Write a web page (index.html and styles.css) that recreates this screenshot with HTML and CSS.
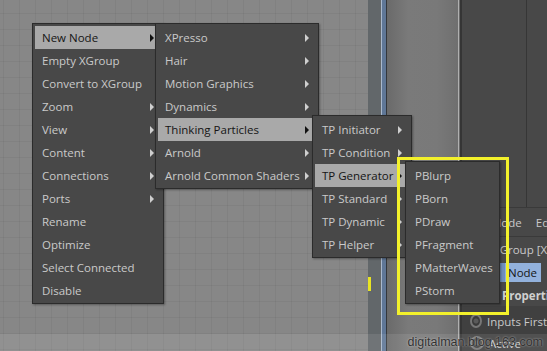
FILE: index.html
```html
<!DOCTYPE html>
<html lang="en">
  <head>
    <meta charset="UTF-8" />
    <meta name="viewport" content="width=device-width, initial-scale=1.0" />
    <title>XPresso context menu</title>
    <link rel="stylesheet" href="styles.css">
  </head>
  <body>
    <div class="screen">
      <!-- node editor canvas and the docked panels to its right -->
      <div class="canvas"></div>
      <div class="dock"></div>
      <div class="sash"></div>
      <div class="viewer"></div>
      <div class="divider"></div>
      <div class="panel">
        <div class="panel-top">
          <div class="panel-col"></div>
          <div class="panel-col"></div>
        </div>
        <div class="attrs">
          <div class="attr-tabs"><span>Mode</span><span>Edit</span></div>
          <div class="attr-title">XGroup [XGroup]</div>
          <div class="attr-buttons"><span class="btn-node">Node</span></div>
          <div class="attr-head">Properties</div>
          <div class="attr-radio"><span class="radio"></span>Inputs First</div>
          <div class="attr-radio"><span class="radio"></span>Active</div>
        </div>
      </div>

      <div class="marker"></div>

      <!-- context menu cascade -->
      <ul class="menu menu-main">
        <li class="item active sub">New Node</li>
        <li class="item">Empty XGroup</li>
        <li class="item">Convert to XGroup</li>
        <li class="item sub">Zoom</li>
        <li class="item sub">View</li>
        <li class="item sub">Content</li>
        <li class="item sub">Connections</li>
        <li class="item sub">Ports</li>
        <li class="item">Rename</li>
        <li class="item">Optimize</li>
        <li class="item">Select Connected</li>
        <li class="item">Disable</li>
      </ul>

      <ul class="menu menu-node">
        <li class="item sub">XPresso</li>
        <li class="item sub">Hair</li>
        <li class="item sub">Motion Graphics</li>
        <li class="item sub">Dynamics</li>
        <li class="item active sub">Thinking Particles</li>
        <li class="item sub">Arnold</li>
        <li class="item sub">Arnold Common Shaders</li>
      </ul>

      <ul class="menu menu-tp">
        <li class="item sub">TP Initiator</li>
        <li class="item sub">TP Condition</li>
        <li class="item active sub">TP Generator</li>
        <li class="item sub">TP Standard</li>
        <li class="item sub">TP Dynamic</li>
        <li class="item sub">TP Helper</li>
      </ul>

      <ul class="menu menu-gen">
        <li class="item">PBlurp</li>
        <li class="item">PBorn</li>
        <li class="item">PDraw</li>
        <li class="item">PFragment</li>
        <li class="item">PMatterWaves</li>
        <li class="item">PStorm</li>
      </ul>

      <div class="callout"></div>

      <div class="watermark">digitalman.blog.163.com</div>
    </div>
  </body>
</html>
```

FILE: styles.css
```css
body {
  margin: 0;
  padding: 0;
  font-family: "Open Sans", "Noto Sans", sans-serif;
  overflow: hidden;
}

.screen {
  position: relative;
  display: flex;
  width: 547px;
  height: 351px;
  overflow: hidden;
}

.canvas,
.dock,
.sash,
.viewer,
.divider {
  flex: none;
}

.canvas {
  width: 368px;
  background-color: #878787;
  background-image: linear-gradient(to right, rgba(0, 0, 0, 0.045) 1px, transparent 1px),
    linear-gradient(to bottom, rgba(0, 0, 0, 0.045) 1px, transparent 1px);
  background-size: 16px 16px;
  background-position: 3px 13px;
}

.dock {
  width: 13px;
  background: #62676a;
}

.sash {
  width: 6px;
  background: linear-gradient(to right, #a9b8cc 0 1px, #5f7797 1px 5px, #33373c 5px);
}

.viewer {
  width: 71px;
  background: linear-gradient(to right, #6a6a6a, #7a7a7a 30%, #797979 70%, #6f6f6f);
}

.divider {
  width: 4px;
  background: linear-gradient(to right, #b0b0b0 0 1px, #6a6a6a 1px 2px, #353535 2px);
}

.panel {
  flex: 1;
  min-width: 0;
  overflow: hidden;
  display: flex;
  flex-direction: column;
  background: #484848;
  color: #c8c8c8;
  font-size: 11.5px;
  white-space: nowrap;
}

.panel-top {
  height: 207px;
  flex: none;
  display: flex;
}

.panel-col {
  flex: 1;
}

.panel-col:first-child {
  flex: none;
  width: 64px;
  border-right: 1px solid #363636;
}

.attrs {
  flex: 1;
  display: flex;
  flex-direction: column;
}

.attr-tabs {
  height: 28px;
  flex: none;
  display: flex;
  align-items: center;
  gap: 14px;
  padding-left: 29px;
  border-top: 1px solid #3a3a3a;
  border-bottom: 1px solid #3a3a3a;
}

.attr-title {
  height: 25px;
  flex: none;
  display: flex;
  align-items: center;
  padding-left: 31px;
}

.attr-buttons {
  height: 22px;
  flex: none;
  padding-left: 38px;
  padding-top: 1px;
  box-sizing: border-box;
}

.btn-node {
  display: inline-block;
  height: 19px;
  line-height: 19px;
  padding: 0 4px 0 8px;
  background: linear-gradient(to right, #6f8fbc 0 5px, #92b1dc 5px);
  color: #151515;
}

.attr-head {
  height: 22px;
  flex: none;
  display: flex;
  align-items: center;
  padding-left: 40px;
  font-weight: bold;
  color: #d0d0d0;
}

.attr-radio {
  height: 22px;
  flex: none;
  display: flex;
  align-items: center;
  gap: 5px;
  padding-left: 8px;
  background: #404040;
}

.attr-radio:nth-child(5) {
  padding-top: 4px;
}

.radio {
  width: 10px;
  height: 10px;
  border-radius: 50%;
  border: 2px solid #777;
  background: radial-gradient(circle, #5a5a5a 0 2px, #3a3a3a 3px);
}

.marker {
  position: absolute;
  left: 368px;
  top: 277px;
  width: 3px;
  height: 14px;
  background: #e8e423;
}

/* context menus */
.menu {
  position: absolute;
  margin: 0;
  padding: 2px 2px 1px;
  list-style: none;
  background: #484848;
  border: 1px solid #2b2b2b;
  box-shadow: 1px 1px 2px rgba(0, 0, 0, 0.35);
  color: #cacaca;
  font-size: 11.5px;
}

.menu-main {
  left: 32px;
  top: 23px;
  width: 126px;
}

.menu-node {
  left: 155px;
  top: 23px;
  width: 158px;
}

.menu-tp {
  left: 312px;
  top: 115px;
  width: 94px;
}

.menu-gen {
  left: 405px;
  top: 161px;
  width: 89px;
}

.item {
  height: 23px;
  display: flex;
  align-items: center;
  justify-content: space-between;
  padding: 0 7px 0 7px;
  white-space: nowrap;
}

.item.sub::after {
  content: "";
  width: 0;
  height: 0;
  border-left: 4px solid #cfcfcf;
  border-top: 4px solid transparent;
  border-bottom: 4px solid transparent;
}

.item.active {
  background: #a9a9a9;
  color: #151515;
}

.item.active::after {
  border-left-color: #111;
}

.callout {
  position: absolute;
  left: 397px;
  top: 157px;
  width: 106px;
  height: 152px;
  border: 3px solid #f3f12b;
}

.watermark {
  position: absolute;
  left: 0;
  right: 0;
  bottom: 0;
  height: 17px;
  padding-right: 4px;
  background: rgba(255, 255, 255, 0.09);
  text-align: right;
  font-family: "Liberation Sans", Arial, sans-serif;
  font-size: 12.5px;
  line-height: 17px;
  color: #333;
  text-shadow: 0 0 2px rgba(255, 255, 255, 0.6);
}
```
